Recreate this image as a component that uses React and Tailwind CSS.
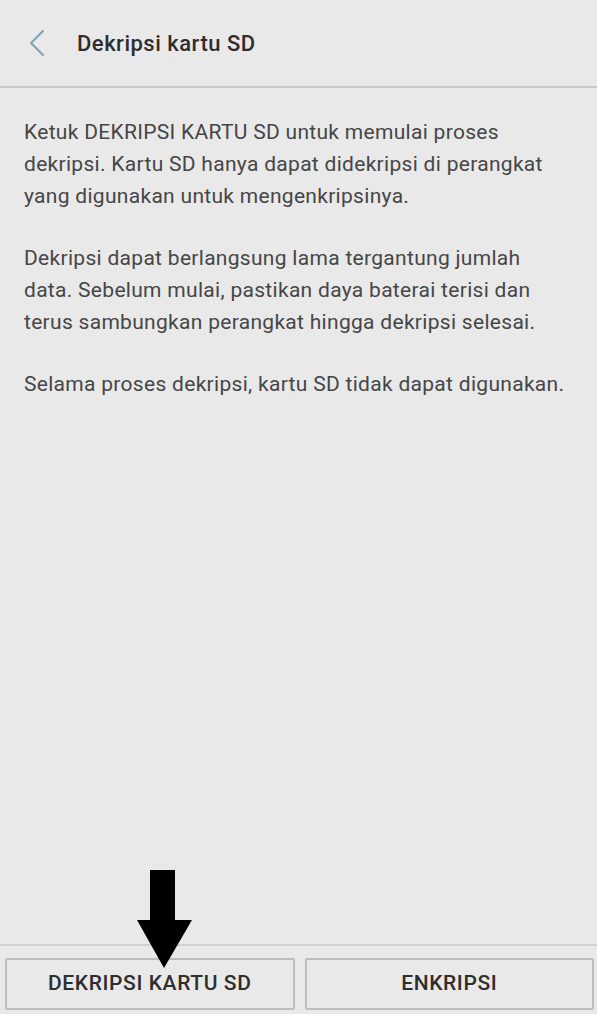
export default function App() {
  const font = { fontFamily: "Roboto, 'Liberation Sans', sans-serif" };
  return (
    <div className="w-[597px] h-[1014px] bg-[#e9e9e9] flex flex-col relative overflow-hidden" style={font}>
      <div className="h-[88px] flex items-center border-b-2 border-[#c9c9c9] shrink-0">
        <div className="w-[77px] flex items-center pl-[28px]">
          <svg width="18" height="28" viewBox="0 0 18 28" fill="none">
            <path d="M15 2 L3 14 L15 26" stroke="#7fa6b6" strokeWidth="2.2" strokeLinecap="round" strokeLinejoin="round" />
          </svg>
        </div>
        <div className="text-[22px] font-medium text-[#2e2e2e] tracking-[0.5px]">Dekripsi kartu SD</div>
      </div>
      <div className="flex-1 px-[24px] pt-[28px] text-[21px] leading-[32px] text-[#464646] tracking-[0.3px] whitespace-nowrap">
        <p>Ketuk DEKRIPSI KARTU SD untuk memulai proses<br />dekripsi. Kartu SD hanya dapat didekripsi di perangkat<br />yang digunakan untuk mengenkripsinya.</p>
        <p className="mt-[30px]">Dekripsi dapat berlangsung lama tergantung jumlah<br />data. Sebelum mulai, pastikan daya baterai terisi dan<br />terus sambungkan perangkat hingga dekripsi selesai.</p>
        <p className="mt-[30px]">Selama proses dekripsi, kartu SD tidak dapat digunakan.</p>
      </div>
      <div className="h-[70px] border-t-2 border-[#d0d0d0] flex gap-[10px] pl-[5px] pr-[3px] pt-[12px] pb-[4px] shrink-0">
        <button className="flex-1 border-2 border-[#bdbdbd] rounded-[2px] text-[21px] font-medium text-[#2e2e2e] tracking-[0.6px] bg-[#e9e9e9]">DEKRIPSI KARTU SD</button>
        <button className="flex-1 border-2 border-[#bdbdbd] rounded-[2px] text-[21px] font-medium text-[#2e2e2e] tracking-[0.6px] bg-[#e9e9e9]">ENKRIPSI</button>
      </div>
      <svg className="absolute left-[137px] top-[870px]" width="56" height="99" viewBox="0 0 56 99">
        <polygon points="13,0 38,0 38,50 55,50 27,98 0,50 13,50" fill="#000" />
      </svg>
    </div>
  );
}
